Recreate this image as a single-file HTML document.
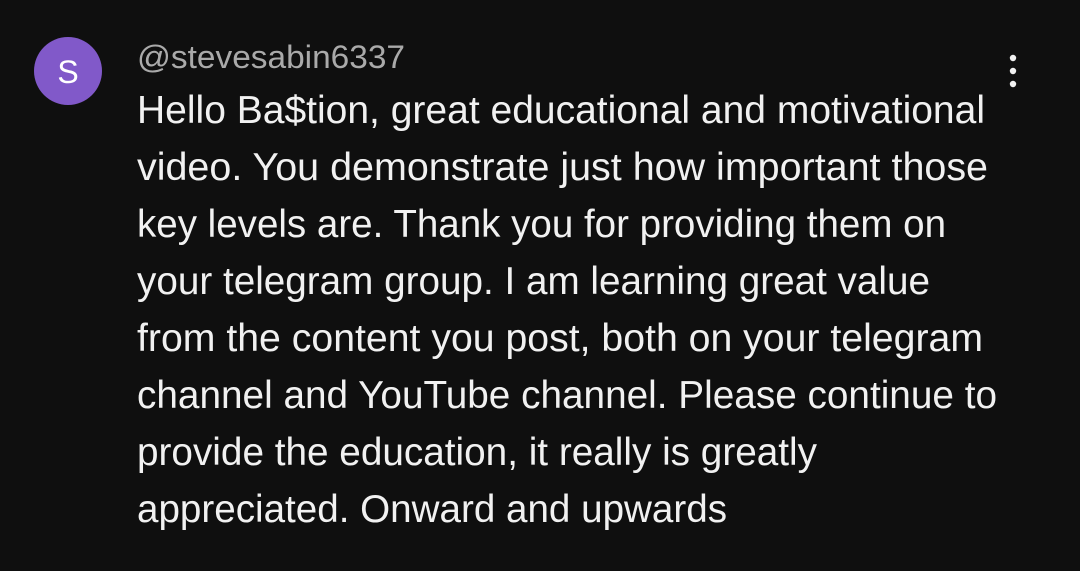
<!DOCTYPE html>
<html><head><style>
html,body{margin:0;padding:0;background:#0f0f0f;}
svg{display:block}
text{font-family:"Liberation Sans",Arial,sans-serif;}
</style></head><body>
<svg width="1080" height="571" viewBox="0 0 1080 571">
<rect width="1080" height="571" fill="#0f0f0f"/>
<circle cx="68" cy="71" r="34" fill="#8159c9"/>
<text x="68" y="83" font-size="32" fill="#fff" text-anchor="middle">S</text>
<text x="137" y="68" font-size="32" fill="#aaaaaa" textLength="268" lengthAdjust="spacingAndGlyphs">@stevesabin6337</text>
<circle cx="1013" cy="58" r="3.2" fill="#f1f1f1"/>
<circle cx="1013" cy="71" r="3.2" fill="#f1f1f1"/>
<circle cx="1013" cy="84" r="3.2" fill="#f1f1f1"/>
<g font-size="39" fill="#f1f1f1">
<text x="137" y="123" textLength="848" lengthAdjust="spacingAndGlyphs">Hello Ba$tion, great educational and motivational</text>
<text x="137" y="180" textLength="851" lengthAdjust="spacingAndGlyphs">video. You demonstrate just how important those</text>
<text x="137" y="237" textLength="809" lengthAdjust="spacingAndGlyphs">key levels are. Thank you for providing them on</text>
<text x="137" y="294" textLength="793" lengthAdjust="spacingAndGlyphs">your telegram group. I am learning great value</text>
<text x="137" y="351" textLength="846" lengthAdjust="spacingAndGlyphs">from the content you post, both on your telegram</text>
<text x="137" y="408" textLength="860" lengthAdjust="spacingAndGlyphs">channel and YouTube channel. Please continue to</text>
<text x="137" y="465" textLength="680" lengthAdjust="spacingAndGlyphs">provide the education, it really is greatly</text>
<text x="137" y="522" textLength="590" lengthAdjust="spacingAndGlyphs">appreciated. Onward and upwards</text>
</g>
</svg>
</body></html>
